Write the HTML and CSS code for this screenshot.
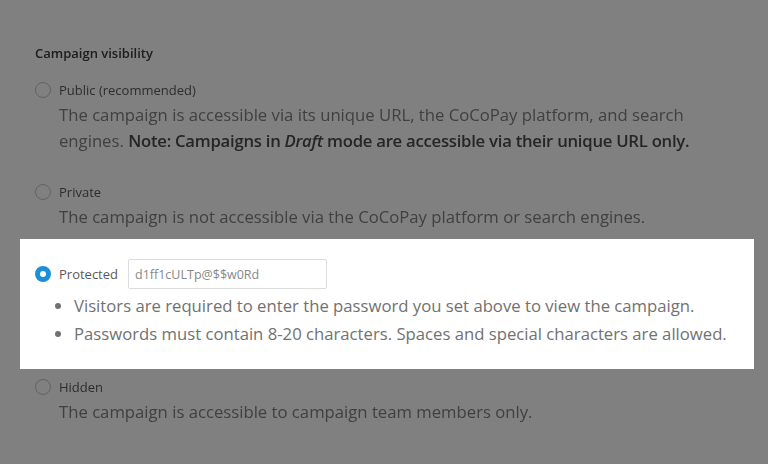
FILE: index.html
```html
<!DOCTYPE html>
<html lang="en">
<head>
<meta charset="utf-8">
<title>Campaign visibility</title>
<link rel="stylesheet" href="styles.css">
</head>
<body>
<main class="page">
  <section class="block dim top">
    <h2 class="heading">Campaign visibility</h2>
    <div class="option">
      <div class="row"><span class="radio"></span><span class="label">Public (recommended)</span></div>
      <p class="desc">The campaign is accessible via its unique URL, the CoCoPay platform, and search engines. <strong>Note: Campaigns in <em>Draft</em> mode are accessible via their unique URL only.</strong></p>
    </div>
    <div class="option private">
      <div class="row"><span class="radio"></span><span class="label">Private</span></div>
      <p class="desc">The campaign is not accessible via the CoCoPay platform or search engines.</p>
    </div>
  </section>
  <section class="spot">
    <div class="row prot-row"><span class="radio checked"></span><span class="label">Protected</span><input class="pwd" type="text" value="d1ff1cULTp@$$w0Rd"></div>
    <ul class="rules">
      <li>Visitors are required to enter the password you set above to view the campaign.</li>
      <li>Passwords must contain 8-20 characters. Spaces and special characters are allowed.</li>
    </ul>
  </section>
  <section class="block dim bottom">
    <div class="option">
      <div class="row"><span class="radio"></span><span class="label">Hidden</span></div>
      <p class="desc">The campaign is accessible to campaign team members only.</p>
    </div>
  </section>
</main>
</body>
</html>
```
FILE: styles.css
```css
* { box-sizing: border-box; }
html, body { margin: 0; padding: 0; }
body {
  background: #808080;
  font-family: "Open Sans", "Noto Sans", "Liberation Sans", sans-serif;
  width: 768px;
  height: 464px;
  overflow: hidden;
}
.page { display: flex; flex-direction: column; }
.block { background: #fff; padding-left: 35px; }
.dim { filter: brightness(0.5); }
.top { padding-top: 43px; padding-bottom: 9px; }
.bottom { padding-top: 8px; padding-bottom: 60px; }
.heading {
  margin: 0;
  font-size: 13px;
  line-height: 20px;
  font-weight: 600;
  color: #3a3a3a;
}
.option { margin-top: 17px; }
.option.private { margin-top: 28px; }
.bottom .option { margin-top: 0; }
.row { display: flex; align-items: center; height: 20px; }
.radio {
  width: 16px; height: 16px; border-radius: 50%;
  border: 1px solid #c4c4c4; background: #fff;
  flex: none;
}
.radio.checked { border: 5px solid #1b8fd8; }
.label { margin-left: 8px; font-size: 13px; color: #5a5a5a; }
.desc {
  margin: 2px 0 0 24px;
  font-size: 16.7px; line-height: 26px;
  color: #808080;
  max-width: 670px;
}
.desc strong { font-weight: 600; color: #4a4a4a; letter-spacing: -0.25px; }
.spot {
  background: #fff;
  margin: 0 14px 0 20px;
  padding: 20px 0 21px 15px;
}
.prot-row { height: 30px; }
.pwd {
  margin-left: 10px;
  width: 199px; height: 30px;
  border: 1px solid #dcdcdc; border-radius: 2px;
  padding: 0 6px;
  font-family: inherit; font-size: 12.5px; color: #888;
  background: #fff;
}
.rules {
  margin: 3px 0 0; padding-left: 39px;
  font-size: 16.7px; line-height: 28px; color: #717171;
}
```
